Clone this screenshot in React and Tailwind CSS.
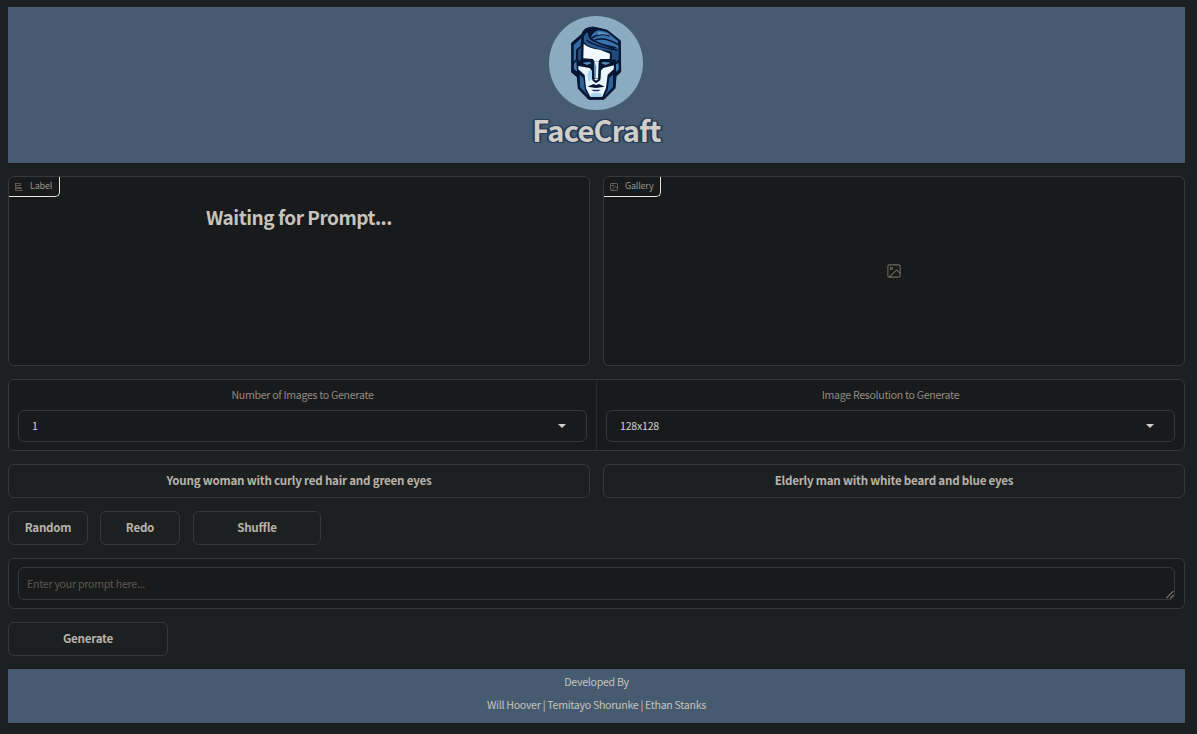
import React from "react";

const button =
  "flex h-[34px] items-center justify-center rounded-[6px] border border-[#35393b] pb-[2px] text-[11.6px] leading-[12px] font-bold tracking-[-0.23px] text-[#b8b2a9]";

function Portrait() {
  return (
    <svg width="94" height="94" viewBox="87 47 282 282" className="mr-[2px] block">
      <circle cx="228" cy="188" r="141" fill="#8babc2" />
      <path d="M155 128 L186 101 Q190 82 218 80 L238 84 L262 90 L301 121 L302 215 L288 228 L285 264 L252 297 L206 297 L175 265 L172 230 L155 216Z" fill="#051532" stroke="#051532" strokeWidth="3" strokeLinejoin="round" />
      <path d="M161 134 L184 113 L182 136 L168 148 L168 176 L161 184Z" fill="#326aa3" />
      <path d="M174 149 L184 140 L183 180 L174 180Z" fill="#20497b" />
      <path d="M162 190 L169 183 L171 213 L162 207Z" fill="#3f7ab5" />
      <path d="M296 135 L296 178 L289 184 L285 177 L276 179 L275 152Z" fill="#20497b" />
      <path d="M296 188 L296 208 L288 214 L288 192Z" fill="#3f7ab5" />
      <path d="M191 130 Q207 145 240 148 L270 160 L269 176 L242 176 L236 183 L223 183 L218 176 L190 174Z" fill="#f2f9ff" />
      <path d="M192 125 Q188 101 205 95 Q202 111 214 120 Q238 134 293 150 L293 156 Q246 150 216 141 Q198 133 192 125Z" fill="#285991" />
      <path d="M213 111 Q219 93 238 90 L261 95 L294 122 L295 142 Q260 135 236 126 Q222 121 213 111Z" fill="#3972ad" />
      <path d="M203 97 Q214 86 232 86 Q211 93 210 110 M216 113 Q240 96 270 107 M224 119 Q256 108 295 133 M199 119 Q220 137 292 150" fill="none" stroke="#051532" strokeWidth="4.5" />
      <path d="M234 95 Q254 94 274 107 Q252 99 234 104Z" fill="#6295c3" />
      <path d="M175 197 L188 199 L209 203 L216 212 L216 235 L241 235 L242 211 L250 203 L282 195 L281 207 L263 223 L258 263 L247 289 L211 289 L198 264 L194 224 L175 207Z" fill="#e9f5fd" />
      <path d="M179 223 L190 232 L195 269 L205 287 L180 260Z M279 223 L268 232 L263 269 L253 287 L279 260Z" fill="#2b6299" />
      <path d="M207 208 L216 214 L216 237 L206 244 L202 225Z" fill="#a9d3ef" />
      <path d="M188 187 L209 184 L215 191 L198 195Z M271 187 L249 184 L243 191 L260 195Z" fill="#5289ba" />
      <path d="M188 180 L217 181 L220 238 L228 245 L238 238 L241 181 L272 180 M182 192 L203 197 L215 192 M276 192 L255 197 L244 192" fill="none" stroke="#051532" strokeWidth="6" />
      <path d="M223 183 L236 183 L234 234 L225 234Z" fill="#f2f9ff" />
      <path d="M223 183 L229 198 L228 236 L223 232Z" fill="#5b9fcd" />
      <path d="M203 259 L220 251 L228 254 L237 251 L254 259 L228 263Z" fill="#051532" />
      <path d="M214 268 L243 268 L235 273 L221 273Z" fill="#16365f" />
      <path d="M212 281 Q228 273 246 281 L242 289 L214 289Z" fill="#a9d3ef" />
    </svg>
  );
}

function LabelIcon() {
  return (
    <svg width="8" height="8" viewBox="0 0 8 8" stroke="#655e55" fill="none" className="block">
      <path d="M.5 0v7.5H8M0 .5h5.5v2H0M1 4.5h5.5M1 5.5h6" strokeWidth=".9" />
    </svg>
  );
}

function ImageIcon({ size, strokeWidth = 1.8 }) {
  return (
    <svg width={size} height={size} viewBox="0 0 24 24" fill="none" stroke="#706a62" strokeWidth={strokeWidth} strokeLinecap="round" strokeLinejoin="round" className="block">
      <rect x="1.5" y="1.5" width="21" height="21" rx="2.2" />
      <circle cx="7.5" cy="7.5" r="1.8" />
      <path d="M22.5 16l-6-6L4 22.5" />
    </svg>
  );
}

function Panel({ icon, label, width, children }) {
  return (
    <section className="relative h-[190px] flex-1 rounded-[6px] border border-[#35393b] bg-[#181a1b]">
      <div className={`absolute top-0 left-0 flex h-[20px] items-center gap-[7px] rounded-br-[5px] border-r border-b border-[#e8e6e3] pl-[6px] text-[9px] leading-none tracking-[-0.2px] text-[#9d9488] ${width}`}>
        {icon}
        <span className="pb-[2px]">{label}</span>
      </div>
      {children}
    </section>
  );
}

function Select({ label, value }) {
  return (
    <div className="flex flex-1 flex-col px-[9px] pt-[8px]">
      <div className="h-[22px] text-center text-[10.6px] leading-[13px] tracking-[-0.3px] text-[#958c80]">{label}</div>
      <div className="flex h-[32px] items-center justify-between rounded-[6px] border border-[#35393b] pr-[20px] pl-[13px] text-[10.6px] leading-[11px] tracking-[-0.22px] text-[#d3cfc9]">
        <span className="pb-px">{value}</span>
        <svg width="8" height="4" viewBox="0 0 8 4" fill="#d3cfc9"><path d="M0 0h8L4 4z" /></svg>
      </div>
    </div>
  );
}

export default function App() {
  return (
    <div className="flex h-[734px] w-[1197px] flex-col gap-[13px] bg-[#1d2021] pt-[7px] pr-[12px] pl-[8px] font-['Noto_Sans_CJK_SC',sans-serif] [font-feature-settings:'liga'_1]">
      <header className="flex h-[156px] shrink-0 flex-col items-center bg-[#465b6f] pt-[9px]">
        <Portrait />
        <h1 className="mt-[4px] text-[29px] leading-[30px] font-bold tracking-[-0.75px] text-[#d1cdc7] [text-shadow:-1px_-1px_0_#233b58,1px_-1px_0_#233b58,-1px_1px_0_#233b58,1px_1px_0_#233b58,2px_0_1px_#233b58,-2px_0_1px_#233b58]">FaceCraft</h1>
      </header>
      <div className="flex gap-[13px]">
        <Panel icon={<LabelIcon />} label="Label" width="w-[51px]">
          <h2 className="pt-[29px] text-center text-[19px] leading-[22px] font-bold tracking-[-0.48px] text-[#c8c3bc]">Waiting for Prompt...</h2>
        </Panel>
        <Panel icon={<ImageIcon size={8} strokeWidth={2.6} />} label="Gallery" width="w-[57px]">
          <div className="flex h-full items-center justify-center"><ImageIcon size={14} /></div>
        </Panel>
      </div>
      <div className="flex h-[72px] shrink-0 rounded-[6px] border border-[#35393b] bg-[#181a1b]">
        <Select label="Number of Images to Generate" value="1" />
        <div className="w-px bg-[#282b2d]" />
        <Select label="Image Resolution to Generate" value="128x128" />
      </div>
      <div className="flex gap-[13px]">
        <button className={`${button} flex-1`}>Young woman with curly red hair and green eyes</button>
        <button className={`${button} flex-1`}>Elderly man with white beard and blue eyes</button>
      </div>
      <div className="flex">
        <button className={`${button} w-[80px]`}>Random</button>
        <button className={`${button} ml-[12px] w-[80px]`}>Redo</button>
        <button className={`${button} ml-[13px] w-[128px]`}>Shuffle</button>
      </div>
      <div className="flex h-[51px] shrink-0 rounded-[6px] border border-[#35393b] bg-[#181a1b] px-[9px] pt-[8px]">
        <div className="relative flex h-[33px] flex-1 items-center rounded-[6px] border border-[#35393b] pb-px pl-[8px] text-[10.6px] leading-[11px] tracking-[-0.25px] text-[#5f594f]">
          Enter your prompt here...
          <svg width="8" height="8" viewBox="0 0 8 8" className="absolute right-0 bottom-0" stroke="#c8c3bc" strokeWidth=".9" fill="none"><path d="M0 7.5L7.5 0M4 7.5L7.5 4" /></svg>
        </div>
      </div>
      <button className={`${button} w-[160px]`}>Generate</button>
      <footer className="flex h-[54px] shrink-0 flex-col items-center bg-[#465b6f] pt-px text-[10.6px] leading-[23px] tracking-[-0.28px] text-[#c8c3bc]">
        <div>Developed By</div>
        <div>Will Hoover | Temitayo Shorunke | Ethan Stanks</div>
      </footer>
    </div>
  );
}
